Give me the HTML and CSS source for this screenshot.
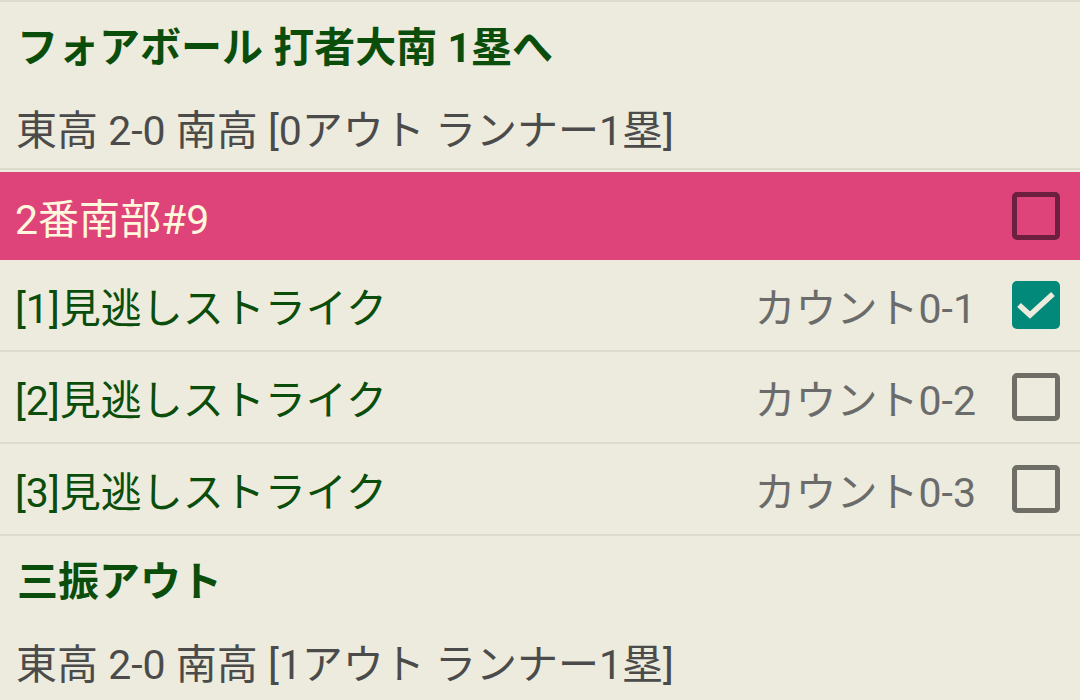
FILE: index.html
```html
<!DOCTYPE html>
<html lang="ja">
<head>
  <meta charset="UTF-8">
  <meta name="viewport" content="width=device-width, initial-scale=1.0">
  <title>試合速報</title>
  <link rel="stylesheet" href="styles.css">
</head>
<body>

<div class="play-list">
  <div class="play">
    <div class="play-title">フォアボール 打者大南 1塁へ</div>
    <div class="play-score">東高 2-0 南高 [0アウト ランナー1塁]</div>
  </div>

  <div class="batter">
    <span class="batter-name">2番南部#9</span>
    <span class="check check-batter"></span>
  </div>

  <div class="pitch">
    <span class="pitch-name">[1]見逃しストライク</span>
    <span class="pitch-count">カウント0-1</span>
    <svg class="check-on" width="48" height="48" viewBox="0 0 48 48">
      <rect x="0" y="0" width="48" height="48" rx="5" fill="#03897a"/>
      <polyline points="7,24 18,34 41,13" fill="none" stroke="#ecebdd" stroke-width="5.5"/>
    </svg>
  </div>
  <div class="pitch">
    <span class="pitch-name">[2]見逃しストライク</span>
    <span class="pitch-count">カウント0-2</span>
    <span class="check"></span>
  </div>
  <div class="pitch">
    <span class="pitch-name">[3]見逃しストライク</span>
    <span class="pitch-count">カウント0-3</span>
    <span class="check"></span>
  </div>

  <div class="play play-last">
    <div class="play-title">三振アウト</div>
    <div class="play-score">東高 2-0 南高 [1アウト ランナー1塁]</div>
  </div>
</div>

</body>
</html>
```

FILE: styles.css
```css
body, html {
  margin: 0;
  padding: 0;
  background-color: #ecebdd;
  font-family: Roboto, "Noto Sans CJK JP", sans-serif;
  height: 100%;
  overflow: hidden;
}

.play-list {
  display: flex;
  flex-direction: column;
  border-top: 2px solid #dcdccd;
}

.play {
  display: flex;
  flex-direction: column;
  border-bottom: 2px solid #dcdccd;
  margin-bottom: 2px;
}

.play-last {
  border-bottom: none;
}

.play-title {
  height: 84px;
  display: flex;
  align-items: center;
  padding-left: 17px;
  font-size: 41px;
  font-weight: bold;
  color: #0b4d0b;
}

.play-score {
  height: 82px;
  display: flex;
  align-items: center;
  padding-left: 16px;
  font-size: 41px;
  color: #4b4b4b;
}

.batter {
  height: 88px;
  display: flex;
  align-items: center;
  padding: 0 20px 0 15px;
  background-color: #de4479;
}

.batter-name {
  flex: 1;
  font-size: 41px;
  color: #fff8dc;
}

.pitch {
  height: 90px;
  display: flex;
  align-items: center;
  padding: 0 20px 0 15px;
  border-bottom: 2px solid #dcdccd;
}

.pitch:first-of-type {
  height: 91px;
}

.pitch-name {
  flex: 1;
  font-size: 41px;
  color: #0b4d0b;
}

.pitch-count {
  font-size: 41px;
  color: #6b6b6b;
  margin-right: 36px;
}

.check {
  width: 38px;
  height: 38px;
  border: 5px solid #6e6d66;
  border-radius: 5px;
}

.check-batter {
  border-color: #6c1f3f;
}

.check-on {
  display: block;
}
```
